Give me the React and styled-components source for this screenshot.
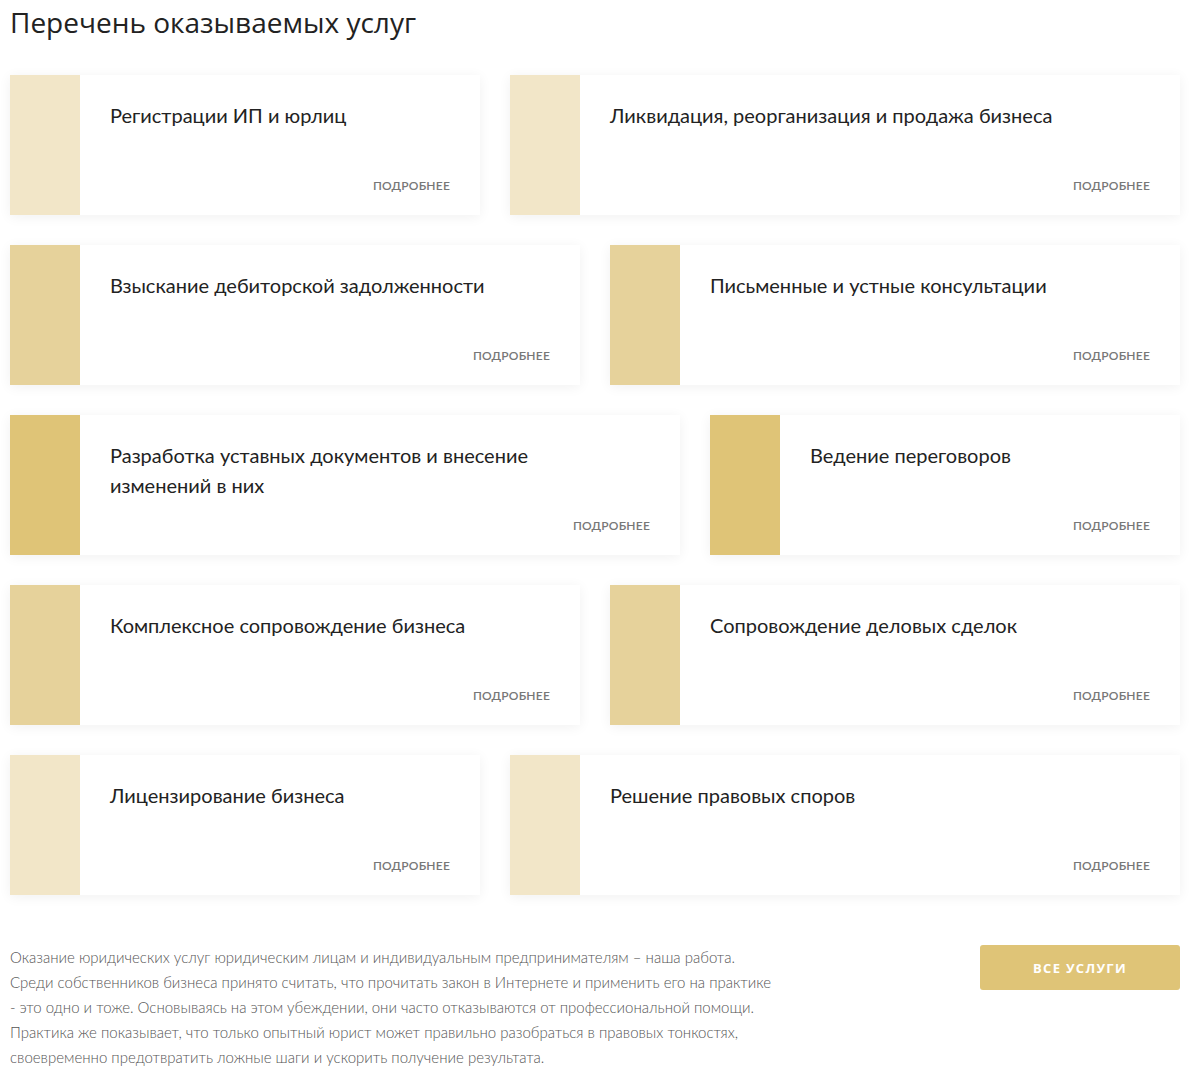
import React from "react";
import styled, { createGlobalStyle } from "styled-components";

const Global = createGlobalStyle`
  html, body { margin: 0; padding: 0; background: #fff; }
  body { font-family: "Open Sans", sans-serif; color: #222; }
`;

const Page = styled.div`
  width: 1190px;
  padding: 0 10px 20px;
  box-sizing: border-box;
`;

const Heading = styled.h1`
  margin: 0;
  padding-top: 3px;
  height: 75px;
  box-sizing: border-box;
  font-family: "Open Sans", sans-serif;
  font-weight: 400;
  font-size: 28px;
  line-height: 38px;
  color: #222;
`;

const Grid = styled.div`
  display: flex;
  flex-direction: column;
  gap: 30px;
`;

const Row = styled.div`
  display: flex;
  gap: 30px;
`;

const Card = styled.div`
  width: ${(p) => p.$w}px;
  height: 140px;
  display: flex;
  background: #fff;
  box-shadow: 0 2px 12px rgba(0, 0, 0, 0.06);
`;

const Strip = styled.div`
  width: 70px;
  flex: none;
  background: ${(p) => p.$color};
`;

const Body = styled.div`
  flex: 1;
  display: flex;
  flex-direction: column;
  justify-content: space-between;
  padding: 25px 30px 20px 30px;
`;

const TitleWrap = styled.div`
  max-width: 450px;
`;

const Title = styled.div`
  font-family: "Lato", sans-serif;
  font-size: 20px;
  line-height: 30px;
  color: #222;
`;

const More = styled.a`
  align-self: flex-end;
  font-family: "Lato", sans-serif;
  font-weight: 600;
  font-size: 12px;
  line-height: 18px;
  letter-spacing: 0.2px;
  color: #777;
  text-decoration: none;
`;

const Footer = styled.div`
  display: flex;
  justify-content: space-between;
  align-items: flex-start;
  margin-top: 50px;
`;

const Text = styled.p`
  margin: 0;
  width: 790px;
  font-family: "Lato", sans-serif;
  font-weight: 300;
  font-size: 15px;
  line-height: 25px;
  color: #555;
`;

const Button = styled.button`
  width: 200px;
  height: 45px;
  border: none;
  border-radius: 3px;
  background: #dfc477;
  color: #fff;
  font-family: "Open Sans", sans-serif;
  font-weight: 700;
  font-size: 13px;
  letter-spacing: 1.3px;
  cursor: pointer;
`;

const C1 = "#f2e6c8";
const C2 = "#e6d29b";
const C3 = "#dfc477";

const rows = [
  [
    { w: 470, c: C1, t: "Регистрации ИП и юрлиц" },
    { w: 670, c: C1, t: "Ликвидация, реорганизация и продажа бизнеса" },
  ],
  [
    { w: 570, c: C2, t: "Взыскание дебиторской задолженности" },
    { w: 570, c: C2, t: "Письменные и устные консультации" },
  ],
  [
    { w: 670, c: C3, t: "Разработка уставных документов и внесение изменений в них" },
    { w: 470, c: C3, t: "Ведение переговоров" },
  ],
  [
    { w: 570, c: C2, t: "Комплексное сопровождение бизнеса" },
    { w: 570, c: C2, t: "Сопровождение деловых сделок" },
  ],
  [
    { w: 470, c: C1, t: "Лицензирование бизнеса" },
    { w: 670, c: C1, t: "Решение правовых споров" },
  ],
];

export default function App() {
  return (
    <Page>
      <Global />
      <Heading>Перечень оказываемых услуг</Heading>
      <Grid>
        {rows.map((r, i) => (
          <Row key={i}>
            {r.map((c, j) => (
              <Card key={j} $w={c.w}>
                <Strip $color={c.c} />
                <Body>
                  <TitleWrap>
                    <Title>{c.t}</Title>
                  </TitleWrap>
                  <More href="#">ПОДРОБНЕЕ</More>
                </Body>
              </Card>
            ))}
          </Row>
        ))}
      </Grid>
      <Footer>
        <Text>
          Оказание юридических услуг юридическим лицам и индивидуальным предпринимателям – наша работа.
          <br />
          Среди собственников бизнеса принято считать, что прочитать закон в Интернете и применить его на практике
          <br />
          - это одно и тоже. Основываясь на этом убеждении, они часто отказываются от профессиональной помощи.
          <br />
          Практика же показывает, что только опытный юрист может правильно разобраться в правовых тонкостях,
          <br />
          своевременно предотвратить ложные шаги и ускорить получение результата.
        </Text>
        <Button>ВСЕ УСЛУГИ</Button>
      </Footer>
    </Page>
  );
}
